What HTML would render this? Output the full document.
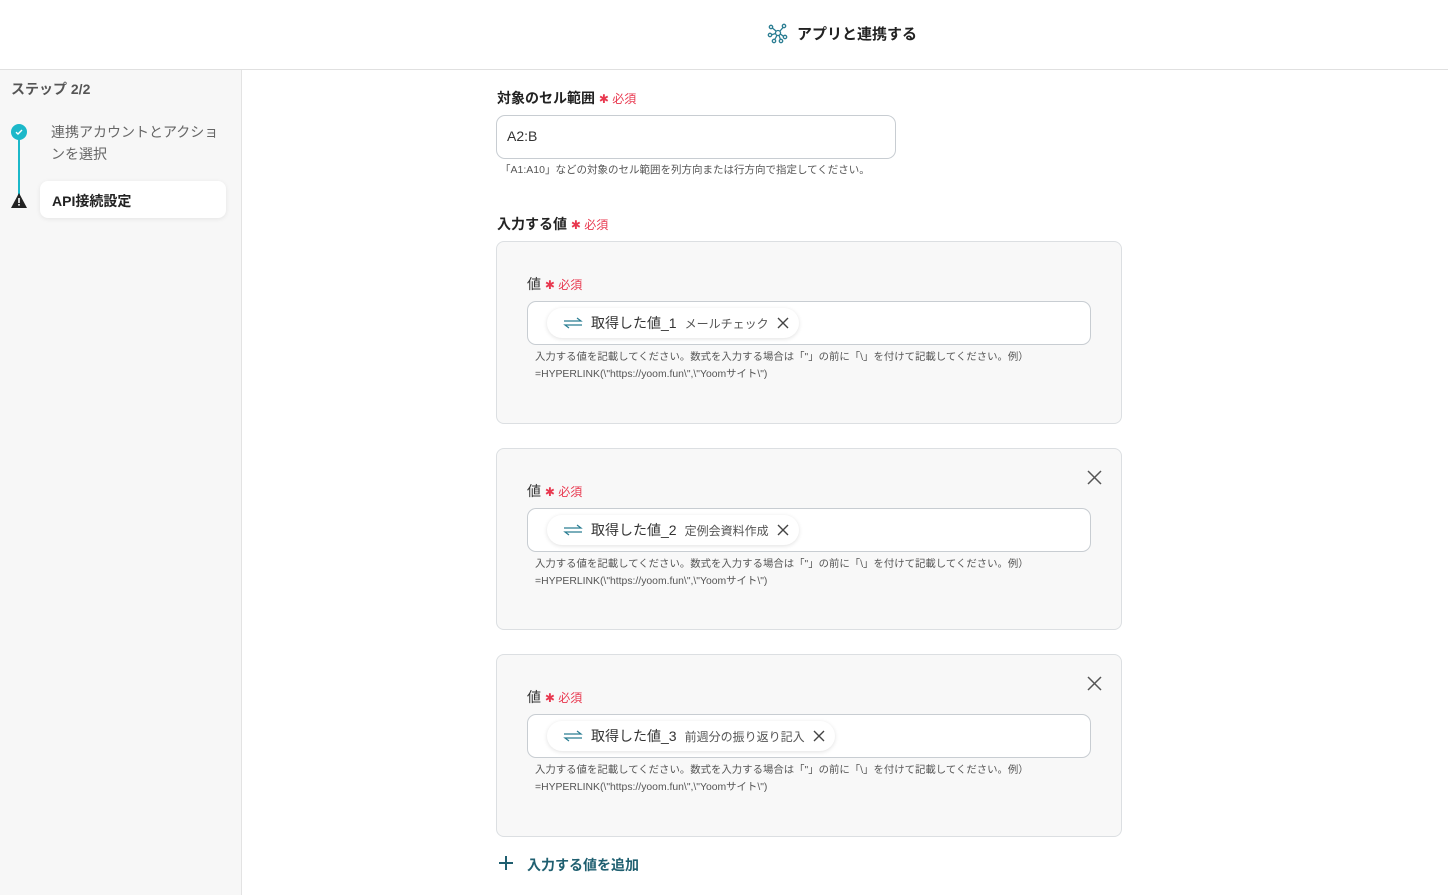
<!DOCTYPE html>
<html><head><meta charset="utf-8"><style>
*{box-sizing:border-box;margin:0;padding:0}
body{width:1448px;height:895px;overflow:hidden;background:#fff;font-family:"Liberation Sans","Noto Sans CJK JP",sans-serif;color:#333;position:relative}
.a{position:absolute}
.hdr{left:0;top:0;width:1448px;height:70px;border-bottom:1px solid #e0e0e0;background:#fff}
.side{left:0;top:70px;width:242px;height:825px;background:#f7f7f7;border-right:1px solid #e3e3e3}
.lbl{font-size:14px;font-weight:bold;color:#222}
.req{color:#e8384f;font-size:12px;font-weight:normal}
.inp{border:1px solid #c8cdd2;border-radius:9px;background:#fff}
.help{font-size:10.4px;color:#555;line-height:17px;white-space:nowrap}
.card{left:496px;width:626px;border:1px solid #dcdfe2;border-radius:8px;background:#f8f8f8}
.chip{position:absolute;left:19px;top:6px;height:30px;border-radius:15px;background:#fff;box-shadow:0 1px 4px rgba(0,0,0,.12);display:flex;align-items:center;padding:0 10px 0 16px;font-size:14px;color:#333;white-space:nowrap}
.chip small{font-size:12px;color:#555;margin-left:8px}
.x{margin-left:8px;display:block}
</style></head><body>
<div class="a hdr"></div>
<div class="a" style="left:767px;top:22px;display:flex;align-items:center;gap:8px">
<svg width="22" height="22" viewBox="0 0 22 22" fill="none" stroke="#2a7d92" stroke-width="1.3"><circle cx="11" cy="11" r="2.5"/><circle cx="4" cy="5" r="1.7"/><circle cx="17" cy="4" r="1.7"/><circle cx="3" cy="13" r="1.7"/><circle cx="18" cy="15" r="1.7"/><circle cx="7" cy="19" r="1.7"/><circle cx="14" cy="19" r="1.7"/><path d="M9 9L5.3 6M13 9L16 5.5M8.6 11.5L4.6 12.8M13.4 12L16.5 14.3M10 13.3L7.8 17.5M12 13.3L13.4 17.4"/></svg>
<span style="font-size:15px;font-weight:bold;color:#222">アプリと連携する</span></div>
<div class="a side"></div>
<div class="a" style="left:11px;top:79px;font-size:14px;font-weight:bold;color:#555">ステップ 2/2</div>
<div class="a" style="left:18px;top:132px;width:2px;height:66px;background:#1cb8c9"></div>
<div class="a" style="left:11px;top:124px;width:16px;height:16px;border-radius:50%;background:#1cb8c9"><svg width="16" height="16" viewBox="0 0 16 16"><path d="M5 8.2L7 10L11 6" fill="none" stroke="#fff" stroke-width="1.4"/></svg></div>
<svg class="a" style="left:11px;top:193px" width="16" height="15" viewBox="0 0 16 15"><path d="M8 0L16 15H0Z" fill="#222"/><rect x="7.2" y="5" width="1.6" height="5" fill="#fff"/><rect x="7.2" y="11" width="1.6" height="1.6" fill="#fff"/></svg>
<div class="a" style="left:51px;top:121px;font-size:14px;line-height:22px;color:#666;width:170px">連携アカウントとアクションを選択</div>
<div class="a" style="left:40px;top:181px;width:186px;height:37px;background:#fff;border-radius:8px;box-shadow:0 1px 5px rgba(0,0,0,.08);padding:10px 12px;font-size:14px;font-weight:bold;color:#222">API接続設定</div>

<div class="a lbl" style="left:497px;top:88px">対象のセル範囲 <span class="req">✱ 必須</span></div>
<div class="a inp" style="left:496px;top:115px;width:400px;height:44px;padding:12px 10px;font-size:14px">A2:B</div>
<div class="a help" style="left:500px;top:162px;font-size:10.5px">「A1:A10」などの対象のセル範囲を列方向または行方向で指定してください。</div>
<div class="a lbl" style="left:497px;top:214px">入力する値 <span class="req">✱ 必須</span></div>

<div class="a card" style="top:241px;height:183px">
<div class="a lbl" style="left:30px;top:32px;font-weight:normal;color:#333">値 <span class="req">✱ 必須</span></div>
<div class="a inp" style="left:30px;top:59px;width:564px;height:44px"><div class="chip"><svg width="20" height="12" viewBox="0 0 20 12" style="margin-right:8px" fill="none" stroke="#2a7d92" stroke-width="1.2"><path d="M1 4H18L14 1M19 8H2L6 11"/></svg>取得した値_1<small>メールチェック</small><svg class="x" width="12" height="12" viewBox="0 0 12 12" stroke="#444" stroke-width="1.4"><path d="M1 1L11 11M11 1L1 11"/></svg></div></div>
<div class="a help" style="left:38px;top:107px">入力する値を記載してください。数式を入力する場合は「"」の前に「\」を付けて記載してください。例）<br>=HYPERLINK(\"https://yoom.fun\",\"Yoomサイト\")</div>
</div>
<div class="a card" style="top:448px;height:182px">
<svg class="a" style="right:19px;top:21px" width="15" height="15" viewBox="0 0 15 15" stroke="#555" stroke-width="1.5"><path d="M1 1L14 14M14 1L1 14"/></svg>
<div class="a lbl" style="left:30px;top:32px;font-weight:normal;color:#333">値 <span class="req">✱ 必須</span></div>
<div class="a inp" style="left:30px;top:59px;width:564px;height:44px"><div class="chip"><svg width="20" height="12" viewBox="0 0 20 12" style="margin-right:8px" fill="none" stroke="#2a7d92" stroke-width="1.2"><path d="M1 4H18L14 1M19 8H2L6 11"/></svg>取得した値_2<small>定例会資料作成</small><svg class="x" width="12" height="12" viewBox="0 0 12 12" stroke="#444" stroke-width="1.4"><path d="M1 1L11 11M11 1L1 11"/></svg></div></div>
<div class="a help" style="left:38px;top:107px">入力する値を記載してください。数式を入力する場合は「"」の前に「\」を付けて記載してください。例）<br>=HYPERLINK(\"https://yoom.fun\",\"Yoomサイト\")</div>
</div>
<div class="a card" style="top:654px;height:183px">
<svg class="a" style="right:19px;top:21px" width="15" height="15" viewBox="0 0 15 15" stroke="#555" stroke-width="1.5"><path d="M1 1L14 14M14 1L1 14"/></svg>
<div class="a lbl" style="left:30px;top:32px;font-weight:normal;color:#333">値 <span class="req">✱ 必須</span></div>
<div class="a inp" style="left:30px;top:59px;width:564px;height:44px"><div class="chip"><svg width="20" height="12" viewBox="0 0 20 12" style="margin-right:8px" fill="none" stroke="#2a7d92" stroke-width="1.2"><path d="M1 4H18L14 1M19 8H2L6 11"/></svg>取得した値_3<small>前週分の振り返り記入</small><svg class="x" width="12" height="12" viewBox="0 0 12 12" stroke="#444" stroke-width="1.4"><path d="M1 1L11 11M11 1L1 11"/></svg></div></div>
<div class="a help" style="left:38px;top:107px">入力する値を記載してください。数式を入力する場合は「"」の前に「\」を付けて記載してください。例）<br>=HYPERLINK(\"https://yoom.fun\",\"Yoomサイト\")</div>
</div>
<svg class="a" style="left:499px;top:856px" width="14" height="14" viewBox="0 0 14 14" stroke="#1f5f70" stroke-width="2"><path d="M7 0V14M0 7H14"/></svg>
<div class="a" style="left:527px;top:855px;font-size:14px;font-weight:bold;color:#1f5f70">入力する値を追加</div>
</body></html>
